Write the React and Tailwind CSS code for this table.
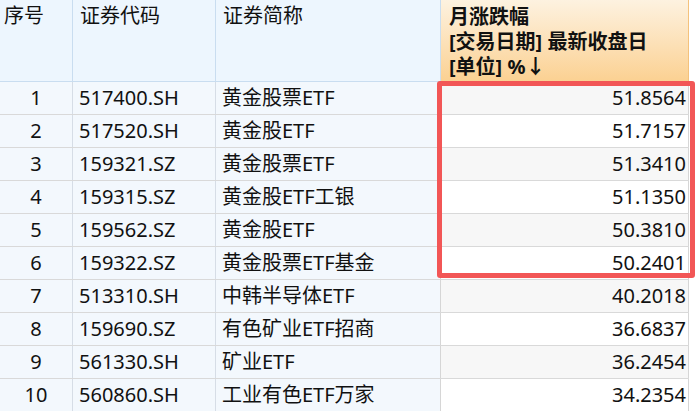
import React from 'react';

const rows = [
    ['1', '517400.SH', '黄金股票ETF', '51.8564'],
    ['2', '517520.SH', '黄金股ETF', '51.7157'],
    ['3', '159321.SZ', '黄金股票ETF', '51.3410'],
    ['4', '159315.SZ', '黄金股ETF工银', '51.1350'],
    ['5', '159562.SZ', '黄金股ETF', '50.3810'],
    ['6', '159322.SZ', '黄金股票ETF基金', '50.2401'],
    ['7', '513310.SH', '中韩半导体ETF', '40.2018'],
    ['8', '159690.SZ', '有色矿业ETF招商', '36.6837'],
    ['9', '561330.SH', '矿业ETF', '36.2454'],
    ['10', '560860.SH', '工业有色ETF万家', '34.2354'],
];

const App = () => {
    return (
        <div
            className="relative w-[696px] h-[411px] overflow-hidden bg-white text-[20px] text-[#111] leading-none"
            style={{ fontFamily: '"Noto Sans", "Noto Sans CJK SC", sans-serif' }}
        >
            {/* Header */}
            <div className="flex h-[82px] w-[689px] border-b border-[#c9ddf0]">
                <div className="w-[73px] shrink-0 bg-[#edf6fe] border-r border-[#c9ddf0] pl-[4px] pt-[6px]">序号</div>
                <div className="w-[143px] shrink-0 bg-[#edf6fe] border-r border-[#c9ddf0] pl-[7px] pt-[6px]">证券代码</div>
                <div className="w-[225px] shrink-0 bg-[#edf6fe] border-r border-[#c9ddf0] pl-[7px] pt-[6px]">证券简称</div>
                <div className="flex-1 bg-gradient-to-b from-[#fdf2e0] to-[#fbd192] border-r border-[#f4c27c] pl-[8px] pt-[4px] font-bold leading-[25px]">
                    <div>月涨跌幅</div>
                    <div>[交易日期] 最新收盘日</div>
                    <div>[单位] %↓</div>
                </div>
            </div>

            {/* Rows */}
            {rows.map((r, i) => (
                <div key={r[0]} className="flex h-[33px] w-[689px] border-b border-[#d9d9d9]">
                    <div className="w-[73px] shrink-0 bg-[#f3f8fd] border-r border-[#d6dde6] flex items-center justify-center">{r[0]}</div>
                    <div className="w-[143px] shrink-0 bg-[#f3f8fd] border-r border-[#d6dde6] flex items-center pl-[6px]">{r[1]}</div>
                    <div className="w-[225px] shrink-0 bg-[#f3f8fd] border-r border-[#d6d6d6] flex items-center pl-[6px]">{r[2]}</div>
                    <div className={`flex-1 border-r border-[#d6d6d6] flex items-center justify-end pr-[2px] ${i % 2 === 0 ? 'bg-[#f7f7f7]' : 'bg-white'}`}>{r[3]}</div>
                </div>
            ))}

            {/* highlight box */}
            <div className="absolute left-[437px] top-[81px] w-[258px] h-[197px] border-[5px] border-[#f25656] rounded-[3px] pointer-events-none" />
        </div>
    );
};

export default App;
